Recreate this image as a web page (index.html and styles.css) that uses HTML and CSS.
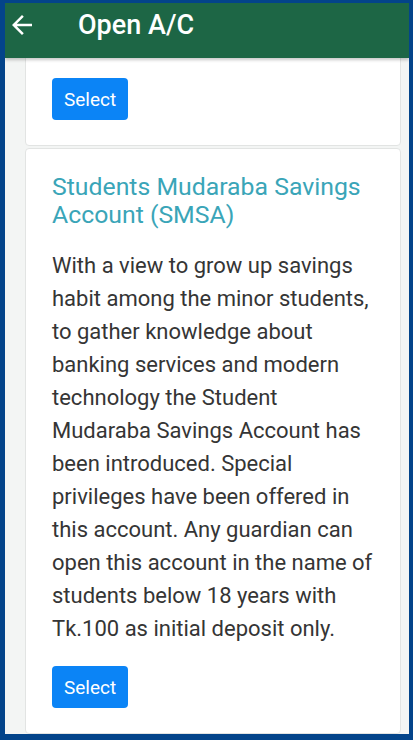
FILE: index.html
```html
<!DOCTYPE html>
<html lang="en">
<head>
<meta charset="utf-8">
<title>Open A/C</title>
<link rel="stylesheet" href="styles.css">
</head>
<body>
<div class="screen">
  <header class="appbar">
    <button class="back" aria-label="Back">
      <svg viewBox="0 0 24 24" width="30" height="30"><path d="M20 11H7.83l5.59-5.59L12 4l-8 8 8 8 1.41-1.41L7.83 13H20v-2z" fill="#fff"/></svg>
    </button>
    <h1 class="title">Open A/C</h1>
  </header>
  <main class="content">
    <section class="card card-first">
      <button class="btn">Select</button>
    </section>
    <section class="card">
      <h2 class="card-title">Students Mudaraba Savings Account (SMSA)</h2>
      <p class="card-text">With a view to grow up savings habit among the minor students, to gather knowledge about banking services and modern technology the Student Mudaraba Savings Account has been introduced. Special privileges have been offered in this account. Any guardian can open this account in the name of students below 18 years with Tk.100 as initial deposit only.</p>
      <button class="btn">Select</button>
    </section>
  </main>
</div>
</body>
</html>
```
FILE: styles.css
```css
html, body {
  margin: 0;
  height: 100%;
}
body {
  background: #03448a;
  padding: 3px 4px 6px 5px;
  box-sizing: border-box;
  font-family: Roboto, "Noto Sans", sans-serif;
}
.screen {
  height: 731px;
  overflow: hidden;
  background: #f3f5f4;
  display: flex;
  flex-direction: column;
}
.appbar {
  position: relative;
  z-index: 2;
  flex: 0 0 auto;
  height: 55px;
  box-sizing: border-box;
  padding: 0 0 12px 2px;
  background: #1d6645;
  display: flex;
  align-items: center;
  box-shadow: 0 2px 3px rgba(0, 0, 0, 0.22);
}
.back {
  border: 0;
  background: none;
  padding: 0;
  width: 30px;
  height: 30px;
  display: flex;
}
.title {
  margin: 0 0 0 41px;
  color: #fff;
  font-size: 27px;
  font-weight: 500;
  line-height: 30px;
}
.content {
  flex: 1 1 auto;
  padding: 0 8px 0 20px;
  display: flex;
  flex-direction: column;
  gap: 2px;
}
.card {
  background: #fff;
  border: 1px solid #e2e4e3;
  border-radius: 4px;
  padding: 24px 26px 25px;
}
.card-first {
  margin-top: -12px;
  padding-top: 31px;
}
.card-title {
  margin: 0 0 20px;
  color: #3aa5b8;
  font-size: 24.8px;
  font-weight: 400;
  line-height: 28px;
}
.card-text {
  margin: 0 0 21px;
  color: #353535;
  font-size: 22px;
  line-height: 33px;
}
.btn {
  display: block;
  height: 42px;
  padding: 0 12px;
  border: 0;
  border-radius: 4px;
  background: #0b84f6;
  color: #fff;
  font-family: Roboto, "Noto Sans", sans-serif;
  font-size: 19px;
}
```
